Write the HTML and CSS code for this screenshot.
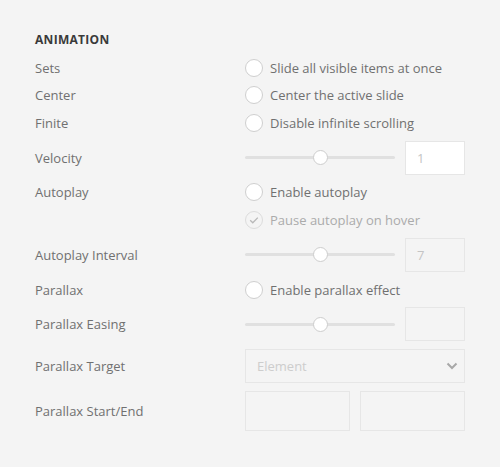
FILE: index.html
```html
<!DOCTYPE html>
<html>
<head>
<meta charset="utf-8">
<link rel="stylesheet" href="styles.css">
</head>
<body>
<div class="panel">
  <h3 class="title">ANIMATION</h3>

  <div class="row">
    <div class="label">Sets</div>
    <label class="radio"><span class="circle"></span>Slide all visible items at once</label>
  </div>
  <div class="row">
    <div class="label">Center</div>
    <label class="radio"><span class="circle"></span>Center the active slide</label>
  </div>
  <div class="row">
    <div class="label">Finite</div>
    <label class="radio"><span class="circle"></span>Disable infinite scrolling</label>
  </div>
  <div class="row">
    <div class="label">Velocity</div>
    <div class="range-wrap">
      <div class="track"><span class="thumb"></span></div>
      <div class="box white">1</div>
    </div>
  </div>
  <div class="row">
    <div class="label">Autoplay</div>
    <label class="radio"><span class="circle"></span>Enable autoplay</label>
  </div>
  <div class="row">
    <div class="label"></div>
    <label class="radio disabled"><span class="circle checked"><svg width="18" height="18" viewBox="0 0 18 18"><path d="M5.2 9.2 L7.8 11.8 L12.8 6.6" fill="none" stroke="#b8b8b8" stroke-width="1.3"/></svg></span>Pause autoplay on hover</label>
  </div>
  <div class="row">
    <div class="label">Autoplay Interval</div>
    <div class="range-wrap">
      <div class="track"><span class="thumb"></span></div>
      <div class="box">7</div>
    </div>
  </div>
  <div class="row">
    <div class="label">Parallax</div>
    <label class="radio"><span class="circle"></span>Enable parallax effect</label>
  </div>
  <div class="row">
    <div class="label">Parallax Easing</div>
    <div class="range-wrap">
      <div class="track"><span class="thumb"></span></div>
      <div class="box"></div>
    </div>
  </div>
  <div class="row">
    <div class="label">Parallax Target</div>
    <div class="select">Element<svg class="chev" width="12" height="8" viewBox="0 0 12 8"><path d="M1.5 1.5 L6 6 L10.5 1.5" fill="none" stroke="#a8a8a8" stroke-width="2"/></svg></div>
  </div>
  <div class="row tall">
    <div class="label">Parallax Start/End</div>
    <div class="pair">
      <div class="box big"></div>
      <div class="box big"></div>
    </div>
  </div>
</div>
</body>
</html>
```
FILE: styles.css
```css
html, body {
  margin: 0;
  padding: 0;
  background: #f4f4f4;
}
.panel {
  box-sizing: border-box;
  width: 500px;
  height: 467px;
  padding: 30px 35px 0 35px;
  display: flex;
  flex-direction: column;
  gap: 7.7px;
  font-family: "Open Sans", "Liberation Sans", sans-serif;
  font-size: 13px;
  color: #707070;
}
.title {
  margin: 0;
  height: 20px;
  line-height: 20px;
  font-size: 12px;
  font-weight: 700;
  letter-spacing: 0.3px;
  color: #3a3a3a;
}
.row {
  display: flex;
  align-items: center;
  min-height: 19.5px;
}
.label {
  width: 210px;
  flex: none;
  line-height: 20px;
}
.radio {
  display: flex;
  align-items: center;
  gap: 7px;
  line-height: 20px;
  color: #707070;
}
.radio.disabled {
  color: #ababab;
}
.circle {
  box-sizing: border-box;
  width: 18px;
  height: 18px;
  border-radius: 50%;
  border: 1px solid #cfcfcf;
  background: #fff;
  flex: none;
  position: relative;
}
.circle.checked {
  background: transparent;
  border-color: #dcdcdc;
}
.circle svg {
  position: absolute;
  left: -1px;
  top: -1px;
}
.range-wrap {
  display: flex;
  align-items: center;
  gap: 10px;
}
.track {
  width: 150px;
  height: 3px;
  border-radius: 2px;
  background: #e0e0e0;
  position: relative;
}
.thumb {
  position: absolute;
  left: 68px;
  top: -6px;
  box-sizing: border-box;
  width: 15px;
  height: 15px;
  border-radius: 50%;
  background: #fff;
  border: 1px solid #cdcdcd;
}
.box {
  box-sizing: border-box;
  width: 60px;
  height: 34px;
  border: 1px solid #e6e6e6;
  padding: 0 11px;
  line-height: 32px;
  color: #c4c4c4;
}
.box.white {
  background: #fff;
}
.select {
  box-sizing: border-box;
  width: 220px;
  height: 34px;
  border: 1px solid #e6e6e6;
  padding: 0 6px 0 11px;
  line-height: 32px;
  color: #cdcdcd;
  display: flex;
  justify-content: space-between;
  align-items: center;
}
.pair {
  display: flex;
  gap: 10px;
}
.box.big {
  width: 105px;
  height: 40px;
}
```
